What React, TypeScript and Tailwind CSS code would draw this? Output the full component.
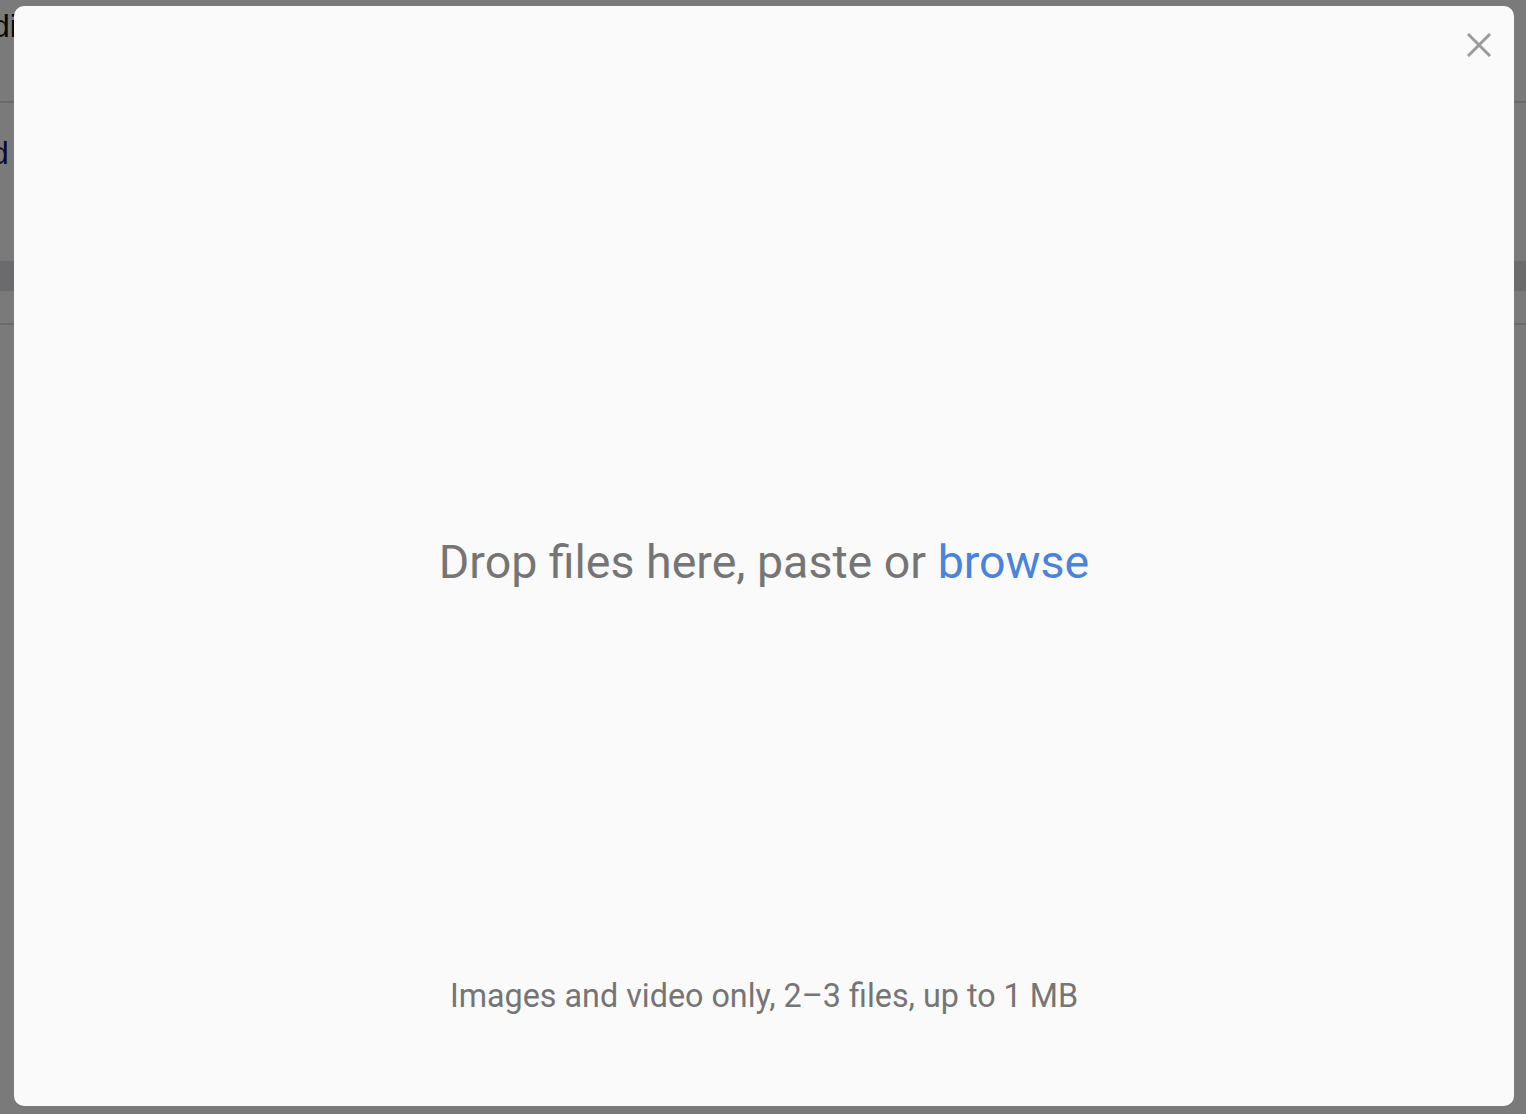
// Page behind the modal: only a sliver of it shows at the left edge
function BackPage() {
  return (
    <div className="h-[1114px] w-full overflow-hidden bg-white font-['Liberation_Sans',sans-serif]">
      <div className="h-[103px] border-b-2 border-[#ddd] pt-[6px]">
        <div className="-ml-[8px] text-[32px] leading-[40px] text-[#111]">dialog</div>
      </div>
      <div className="h-[158px] pt-[30px]">
        <div className="-ml-[9px] text-[32px] leading-[40px] text-[#1a1a5e]">d</div>
      </div>
      <div className="h-[30px] bg-[#e0e0e4]" />
      <div className="h-[34px] border-b-2 border-[#ddd]" />
    </div>
  )
}

export default function App() {
  return (
    <div className="relative h-[1114px] w-[1526px] overflow-hidden">
      <BackPage />

      {/* Overlay */}
      <div className="absolute inset-0 bg-black/[0.52]" />

      {/* Dashboard modal */}
      <div className="absolute left-[14px] top-[6px] flex h-[1100px] w-[1500px] flex-col rounded-[10px] bg-[#fafafa] font-['Roboto',sans-serif]">
        <button className="absolute right-[23px] top-[27px]">
          <svg width="24" height="24" viewBox="0 0 24 24" fill="none" stroke="#9b9b9b" strokeWidth="3" strokeLinecap="square">
            <path d="M2 2 L22 22 M22 2 L2 22" />
          </svg>
        </button>

        {/* spacer keeps the title centred in the modal */}
        <div className="h-[138px]" />

        <div className="flex flex-1 items-center justify-center">
          <div className="text-[46.5px] text-[#757575]">
            Drop files here, paste or <span className="text-[#4a83dc]">browse</span>
          </div>
        </div>

        <div className="h-[124px] text-center text-[32.3px] leading-[28px] text-[#757575]">
          Images and video only, 2–3 files, up to 1 MB
        </div>
      </div>
    </div>
  )
}
